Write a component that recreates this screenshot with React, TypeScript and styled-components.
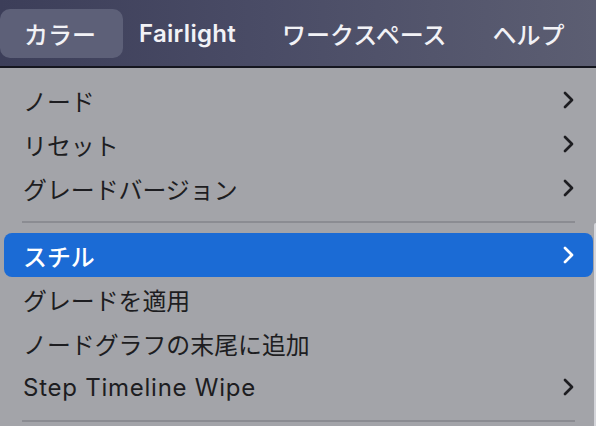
import React from "react";
import styled, { createGlobalStyle } from "styled-components";

const Global = createGlobalStyle`
  html, body { margin: 0; padding: 0; overflow: hidden; }
  body {
    width: 596px; height: 426px;
    background: #a3a4a9;
    font-family: Inter, "Noto Sans CJK JP", sans-serif;
  }
`;

const Page = styled.div`
  width: 596px;
  height: 426px;
  display: flex;
  flex-direction: column;
  overflow: hidden;
`;

const MenuBar = styled.div`
  height: 66px;
  flex-shrink: 0;
  display: flex;
  align-items: center;
  background: linear-gradient(90deg, #3c3e59 0%, #4a4c66 45%, #5c5e72 100%);
  border-bottom: 2px solid #15161f;
`;

const BarItem = styled.div<{ $active?: boolean; $latin?: boolean; $pl?: number; $pr?: number }>`
  height: 49px;
  box-sizing: border-box;
  display: flex;
  align-items: center;
  padding: 0 ${(p) => p.$pr ?? 23}px 0 ${(p) => p.$pl ?? 23}px;
  color: #f2f2f6;
  font-size: 24px;
  font-weight: ${(p) => (p.$latin ? 600 : 500)};
  letter-spacing: ${(p) => (p.$latin ? "0.3px" : "0")};
  border-radius: 10px;
  background: ${(p) => (p.$active ? "#5d6078" : "transparent")};
  white-space: nowrap;
`;

const Menu = styled.div`
  flex: 1;
  display: flex;
  flex-direction: column;
  padding: 10px 3px 0 4px;
  position: relative;
`;

const Row = styled.div<{ $active?: boolean; $latin?: boolean }>`
  height: 44px;
  flex-shrink: 0;
  display: flex;
  align-items: center;
  justify-content: space-between;
  padding: 0 18px 0 19px;
  border-radius: 8px;
  background: ${(p) => (p.$active ? "#1b6bd5" : "transparent")};
  color: ${(p) => (p.$active ? "#ffffff" : "#1d1d21")};
  font-size: ${(p) => (p.$latin ? 24 : 23.9)}px;
  letter-spacing: ${(p) => (p.$latin ? "0.75px" : "0")};
  font-weight: ${(p) => (p.$active ? 500 : 400)};
  white-space: nowrap;
`;

const Sep = styled.div`
  height: 23px;
  flex-shrink: 0;
  display: flex;
  align-items: center;
  padding: 0 18px;
  &::after {
    content: "";
    flex: 1;
    height: 2px;
    background: #8b8c92;
  }
`;

const Edge = styled.div`
  position: absolute;
  right: 0;
  top: 155px;
  width: 2px;
  bottom: 0;
  background: #d4d5da;
  border-radius: 2px 0 0 0;
`;

const Chevron = ({ color }: { color: string }) => (
  <svg width="13" height="20" viewBox="0 0 13 20">
    <path d="M3 3 L10 10 L3 17" fill="none" stroke={color} strokeWidth="2.7" strokeLinecap="round" strokeLinejoin="round" />
  </svg>
);

type Item = { label: string; sub?: boolean; active?: boolean; latin?: boolean } | "sep";

const items: Item[] = [
  { label: "ノード", sub: true },
  { label: "リセット", sub: true },
  { label: "グレードバージョン", sub: true },
  "sep",
  { label: "スチル", sub: true, active: true },
  { label: "グレードを適用" },
  { label: "ノードグラフの末尾に追加" },
  { label: "Step Timeline Wipe", sub: true, latin: true },
  "sep",
];

export default function App() {
  return (
    <Page>
      <Global />
      <MenuBar>
        <BarItem $active $pl={24} $pr={27}>カラー</BarItem>
        <BarItem $latin $pl={16}>Fairlight</BarItem>
        <BarItem>ワークスペース</BarItem>
        <BarItem>ヘルプ</BarItem>
      </MenuBar>
      <Menu>
        {items.map((it, i) =>
          it === "sep" ? (
            <Sep key={i} />
          ) : (
            <Row key={i} $active={it.active} $latin={it.latin}>
              <span>{it.label}</span>
              {it.sub && <Chevron color={it.active ? "#ffffff" : "#1d1d21"} />}
            </Row>
          )
        )}
        <Edge />
      </Menu>
    </Page>
  );
}
